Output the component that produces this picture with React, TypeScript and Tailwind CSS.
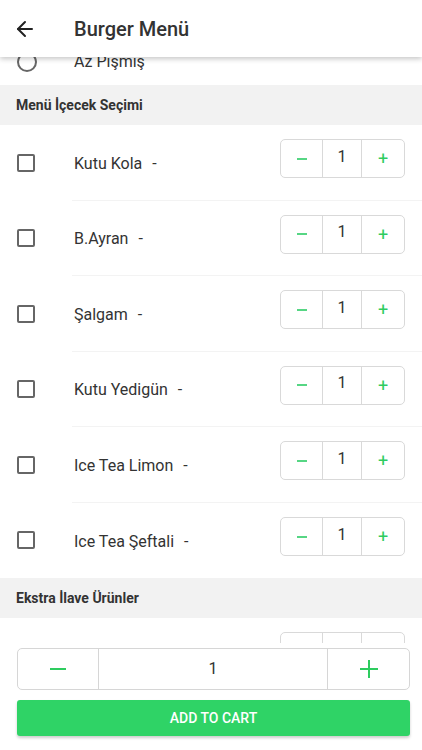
import { ArrowLeft } from 'lucide-react';

const drinks = ['Kutu Kola', 'B.Ayran', 'Şalgam', 'Kutu Yedigün', 'Ice Tea Limon', 'Ice Tea Şeftali'];

function Stepper() {
  return (
    <div className="flex h-[39px] w-[125px] -mt-[7px] rounded-[5px] border border-[#d9d9d9] bg-white">
      <div className="flex w-[42px] items-center justify-center border-r border-[#d9d9d9]">
        <span className="block h-[2px] w-[10px] bg-[#56d684]" />
      </div>
      <div className="flex w-[39px] items-center justify-center border-r border-[#d9d9d9] pb-[4px] text-[16px] text-[#333]">
        1
      </div>
      <div className="flex flex-1 items-center justify-center text-[18px] text-[#2ecc5f]">+</div>
    </div>
  );
}

function DrinkRow({ name, last }: { name: string; last?: boolean }) {
  return (
    <div className="flex h-[75.5px] items-stretch">
      <div className="flex w-[72px] shrink-0 items-center pl-[17px]">
        <span className="block h-[18px] w-[18px] rounded-[2px] border-2 border-[#666]" />
      </div>
      <div
        className={
          'flex flex-1 items-center justify-between pr-[17px] ' +
          (last ? '' : 'border-b border-[#f3f3f3]')
        }
      >
        <span className="pl-[2px] pt-[3px] text-[16px] text-[#333]">
          {name}
          <span className="ml-[10px]">-</span>
        </span>
        <Stepper />
      </div>
    </div>
  );
}

export default function App() {
  return (
    <div
      className="flex h-[750px] w-full flex-col overflow-hidden bg-white"
      style={{ fontFamily: 'Roboto, "Noto Sans", sans-serif' }}
    >
      <header className="relative z-10 flex h-[57px] shrink-0 items-center bg-white shadow-[0_2px_5px_rgba(0,0,0,0.22)]">
        <ArrowLeft className="ml-[13px] h-[24px] w-[24px] text-[#222]" strokeWidth={2} />
        <h1 className="ml-[37px] text-[20px] font-medium text-[#333]">Burger Menü</h1>
      </header>

      <main className="min-h-0 flex-1 overflow-hidden">
        <div className="h-[28px] overflow-hidden">
          <div className="-mt-[15px] flex h-[40px] items-center">
            <span className="ml-[17px] block h-[20px] w-[20px] rounded-full border-2 border-[#666]" />
            <span className="ml-[37px] text-[16px] text-[#333]">Az Pişmiş</span>
          </div>
        </div>

        <div className="flex h-[40px] items-center bg-[#f2f2f2] px-[16px] text-[14px] font-bold text-[#333]">
          Menü İçecek Seçimi
        </div>
        {drinks.map((d, i) => (
          <DrinkRow key={d} name={d} last={i === drinks.length - 1} />
        ))}

        <div className="flex h-[40px] items-center bg-[#f2f2f2] px-[16px] text-[14px] font-bold text-[#333]">
          Ekstra İlave Ürünler
        </div>
        <div className="flex h-[75.5px] justify-end pr-[17px] pt-[14px]">
          <div className="flex h-[39px] w-[125px] rounded-[5px] border border-[#d9d9d9]">
            <div className="w-[42px] border-r border-[#d9d9d9]" />
            <div className="w-[39px] border-r border-[#d9d9d9]" />
          </div>
        </div>
      </main>

      <footer className="flex h-[107px] shrink-0 flex-col bg-white px-[17px] pt-[5px]">
        <div className="flex h-[42px] w-[393px] rounded-[5px] border border-[#d6d6d6]">
          <div className="flex w-[81px] items-center justify-center border-r border-[#d6d6d6]">
            <span className="block h-[2px] w-[16px] bg-[#2ecc5f]" />
          </div>
          <div className="flex flex-1 items-center justify-center text-[16px] text-[#333]">1</div>
          <div className="flex w-[82px] items-center justify-center border-l border-[#d6d6d6]">
            <span className="relative block h-[18px] w-[18px]">
              <span className="absolute left-0 top-[8px] block h-[2px] w-[18px] bg-[#2ecc5f]" />
              <span className="absolute left-[8px] top-0 block h-[18px] w-[2px] bg-[#2ecc5f]" />
            </span>
          </div>
        </div>
        <button className="mt-[10px] flex h-[36px] w-[393px] items-center justify-center rounded-[3px] bg-[#2fd366] text-[14px] font-medium text-white shadow-[0_2px_3px_rgba(0,0,0,0.2)]">
          ADD TO CART
        </button>
      </footer>
    </div>
  );
}
